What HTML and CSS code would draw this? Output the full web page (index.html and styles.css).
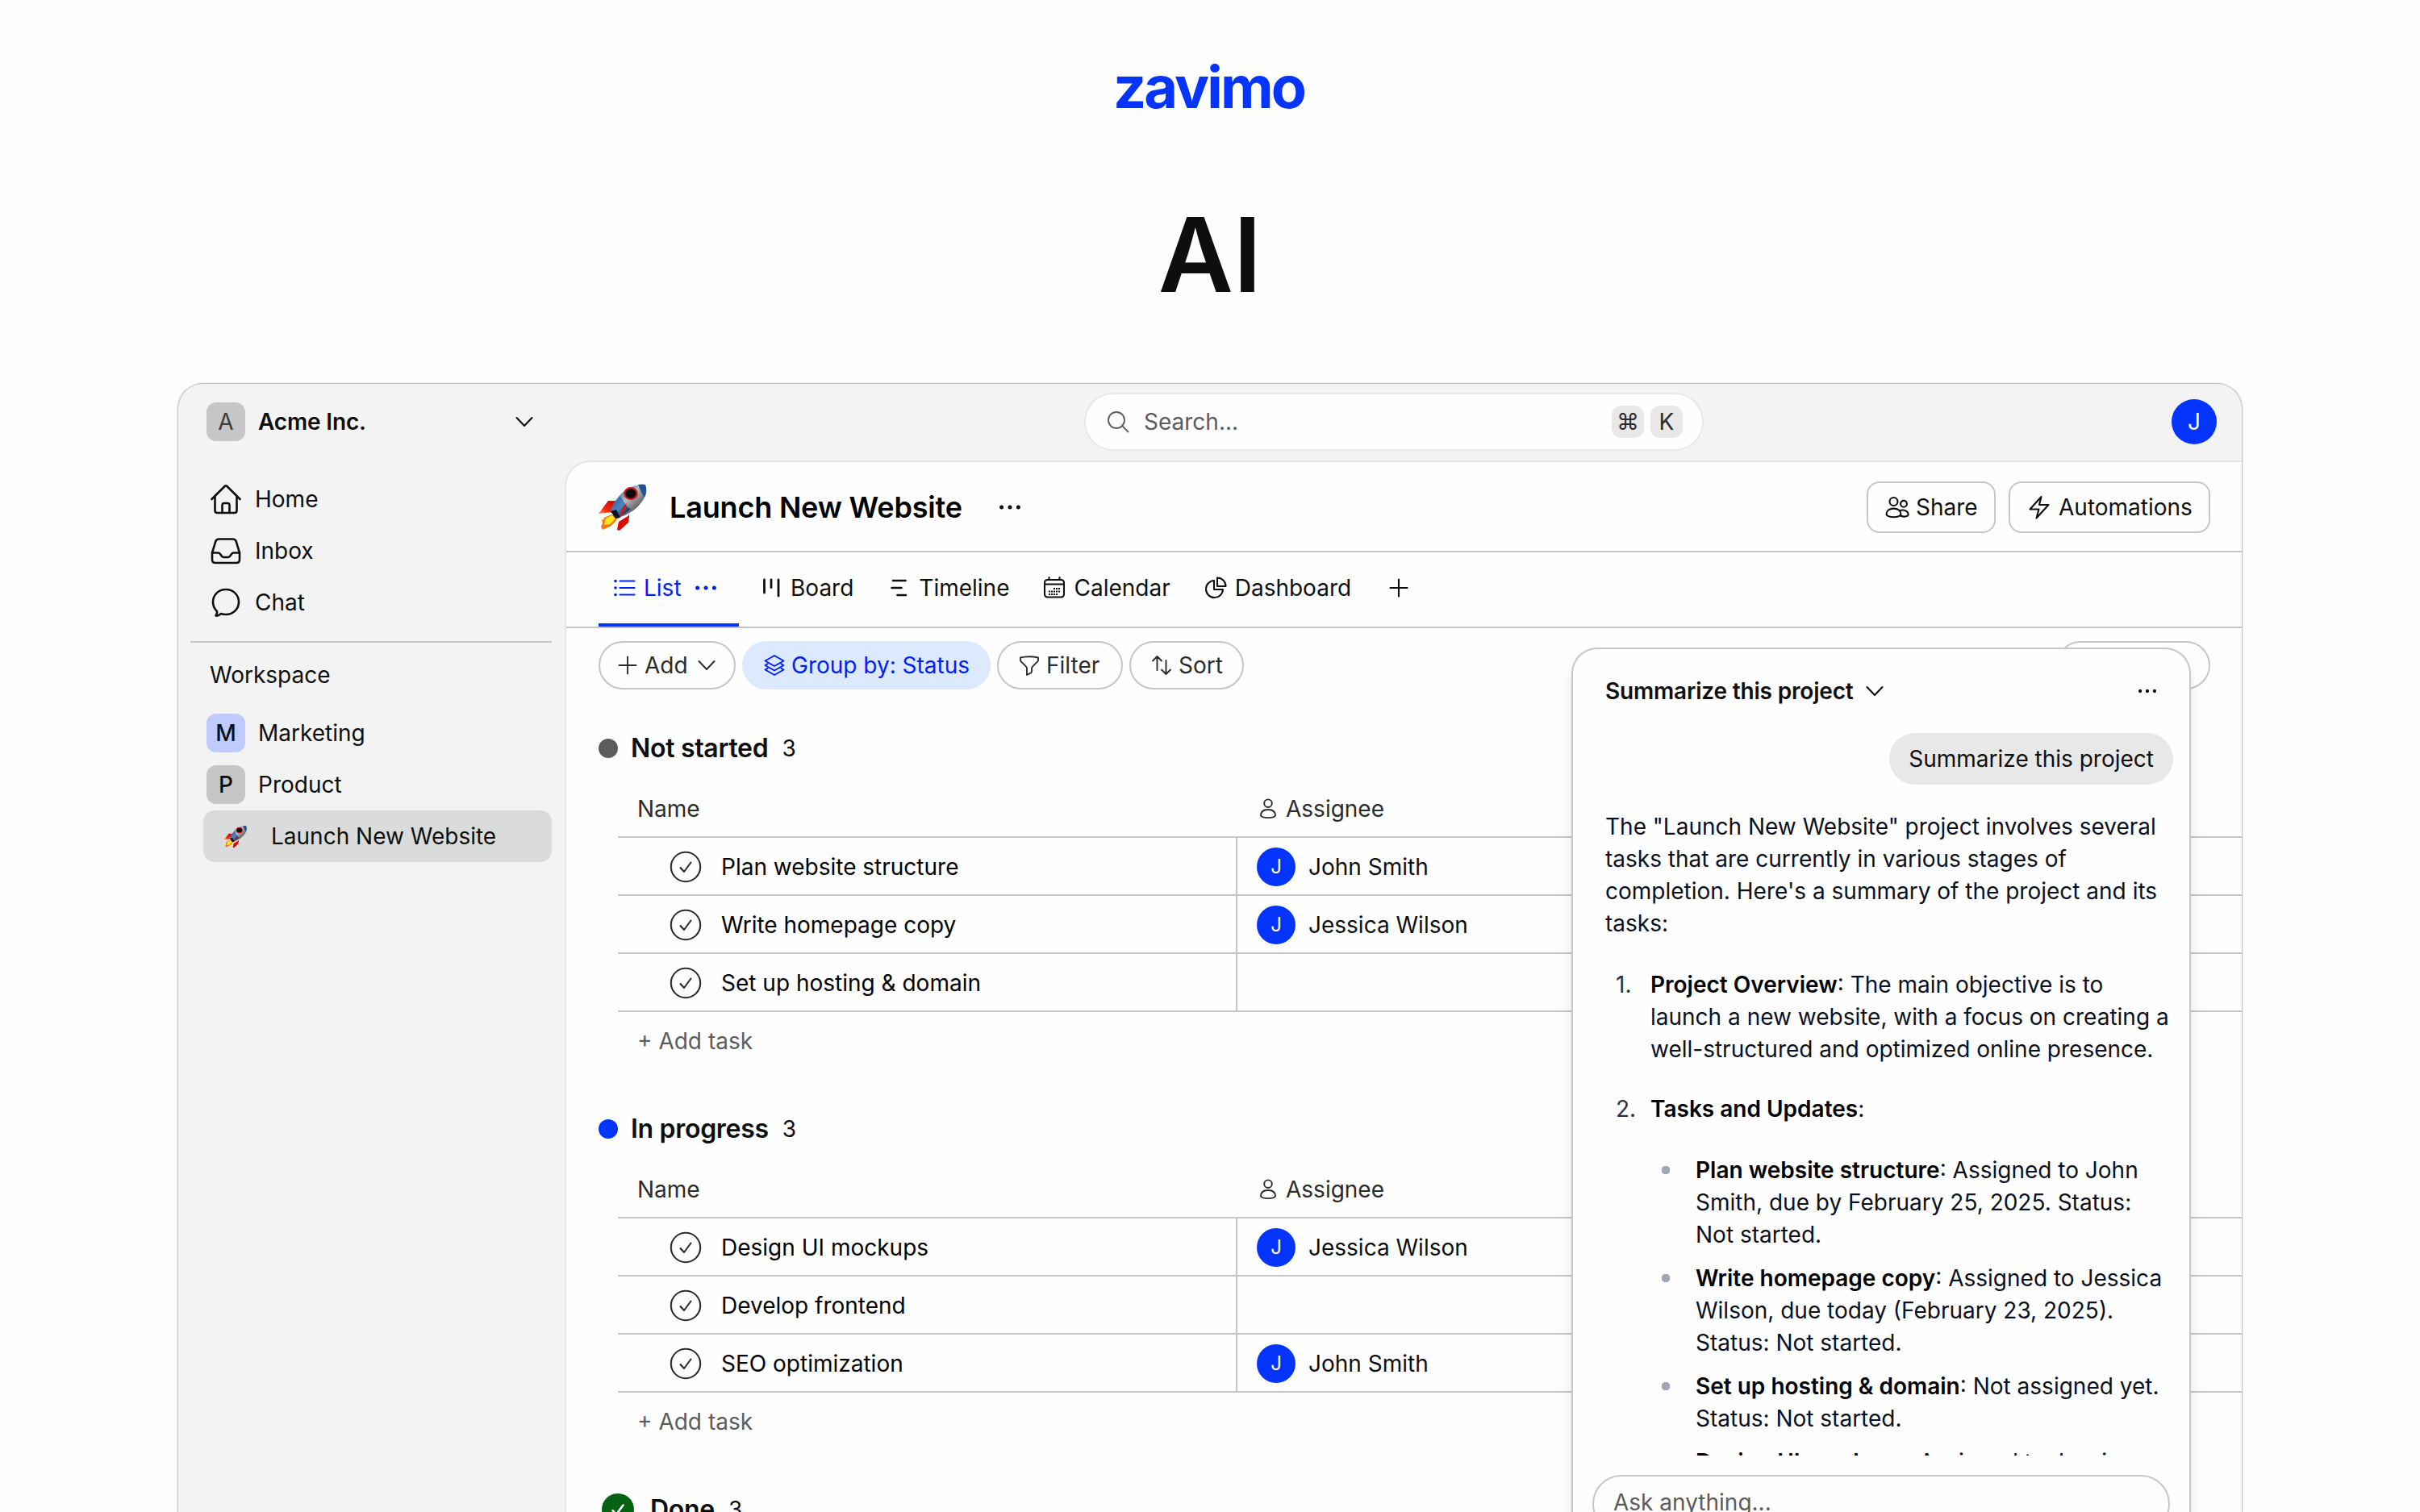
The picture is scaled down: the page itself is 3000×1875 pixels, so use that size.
FILE: index.html
```html
<!DOCTYPE html>
<html lang="en">
<head>
    <meta charset="UTF-8">
    <title>Zavimo AI</title>
    <link rel="stylesheet" href="styles.css">
</head>
<body>

<!-- shared icons -->
<svg class="sprite" width="0" height="0">
    <linearGradient id="hull" x1="0" y1="0" x2="1" y2="1">
        <stop offset="0.15" stop-color="#2f5f9e"/>
        <stop offset="0.45" stop-color="#b9bcc0"/>
        <stop offset="0.65" stop-color="#77797d"/>
        <stop offset="1" stop-color="#0c1526"/>
    </linearGradient>
    <linearGradient id="belly" x1="0" y1="0" x2="1" y2="1">
        <stop offset="0.1" stop-color="#2d62a8"/>
        <stop offset="0.5" stop-color="#4f83bd"/>
        <stop offset="0.9" stop-color="#0a1a38"/>
    </linearGradient>
    <linearGradient id="fin" x1="1" y1="0" x2="0" y2="1">
        <stop offset="0.3" stop-color="#d90d05"/>
        <stop offset="0.7" stop-color="#f02a10"/>
        <stop offset="1" stop-color="#ffa040"/>
    </linearGradient>
    <symbol id="rocket" viewBox="0 0 80 74">
        <path d="M36 29 L20 29 L8 45 L26 43 Z" fill="url(#fin)"/>
        <path d="M46 45 L46 50 L33 56 L31 65 L43 55 Z" fill="url(#fin)"/>
        <path d="M46 47 L45 56 L34 66 L31 65 L33 55 Z" fill="#d90d05"/>
        <path d="M24 46 L15 50 L14 53 L12 52 L13 57 L11 61 L13 65 L22 61 L28 56 L32 50 Z" fill="#f47a12"/>
        <path d="M24 47 L17 51 L15 59 L22 58 L29 51 Z" fill="#ffe81c"/>
        <path d="M23 43 Q27 27 42 15 Q54 8 66 9 Q69 20 62 30 Q52 44 33 50 Z" fill="url(#hull)"/>
        <path d="M23 43 Q26 31 35 23 Q43 38 48 39 Q41 46 33 50 Z" fill="url(#belly)"/>
        <path d="M57 9 Q62 8 66 9 Q69 17 65 25 Q60 18 57 9 Z" fill="#24528f"/>
        <path d="M23 42 L30 40 L35 50 L29 51 Z" fill="#0c1324"/>
        <path d="M43 32 Q37 36 34 50 Q40 44 43 32 Z" fill="#e01208"/>
        <ellipse cx="48" cy="20" rx="7.6" ry="7" fill="#0b0b10" stroke="#cf1712" stroke-width="2.2"/>
    </symbol>
    <symbol id="chevron" viewBox="0 0 24 24"><path d="M2.500 7 L12 17 L21.500 7"/></symbol>
    <symbol id="dots" viewBox="0 0 28 28"><g fill="currentColor" stroke="none"><circle cx="3.600" cy="14" r="2.500"/><circle cx="14" cy="14" r="2.500"/><circle cx="24.400" cy="14" r="2.500"/></g></symbol>
    <symbol id="plus" viewBox="0 0 28 28"><path d="M14 3.500 V24.500 M3.500 14 H24.500"/></symbol>
    <symbol id="user" viewBox="0 0 24 28"><circle cx="12" cy="7.200" r="4.800"/><path d="M3 22.500 C3 17.600 6.500 15 12 15 S21 17.600 21 22.500 C18.500 26 5.500 26 3 22.500 Z"/></symbol>
    <symbol id="check" viewBox="0 0 40 40"><circle cx="20" cy="20" r="18.200"/><path d="M13.500 21 L18 26 L26.500 14.500"/></symbol>
</svg>

<header class="hero">
    <div class="logo">zavimo</div>
    <h1>AI</h1>
</header>

<div class="window">
    <div class="topbar">
        <div class="account">
            <span class="badge badge-muted">A</span>
            <span class="account-name">Acme Inc.</span>
            <svg class="icon account-chevron"><use href="#chevron"/></svg>
        </div>
        <div class="search">
            <svg class="icon search-icon" viewBox="0 0 28 28"><circle cx="12" cy="12" r="10"/><path d="M19.200 19.200 L26.500 26.500"/></svg>
            <span>Search...</span>
            <kbd>⌘</kbd>
            <kbd>K</kbd>
        </div>
        <div class="avatar avatar-lg">J</div>
    </div>

    <aside class="sidebar">
        <a class="nav-item">
            <svg class="icon nav-icon" viewBox="0 0 40 40"><path d="M2.500 20 L18.600 4 Q20 2.700 21.400 4 L37.500 20"/><path d="M6.500 16.500 V34 Q6.500 37 9.500 37 H30.500 Q33.500 37 33.500 34 V16.500"/><path d="M15.500 37 V27.500 Q15.500 25 18 25 H22 Q24.500 25 24.500 27.500 V37"/></svg>
            Home
        </a>
        <a class="nav-item">
            <svg class="icon nav-icon" viewBox="0 0 40 40"><path d="M3 22.500 L7.300 8.300 Q8.300 5.500 11.300 5.500 H28.700 Q31.700 5.500 32.700 8.300 L37 22.500 V31 Q37 35 33 35 H7 Q3 35 3 31 Z"/><path d="M3 22.500 H10 Q12 22.500 13.200 24.300 Q15 28 17.500 28 H22.500 Q25 28 26.800 24.300 Q28 22.500 30 22.500 H37"/></svg>
            Inbox
        </a>
        <a class="nav-item">
            <svg class="icon nav-icon" viewBox="0 0 40 40"><path d="M20 4 C29.500 4 36 11 36 19.500 C36 28 29.500 35 20 35 C17.800 35 15.800 34.700 14 34 C12 36 9.500 36.800 7.500 36.500 C8.800 34.800 9.300 32.800 8.800 30.800 C5.800 28 4 24 4 19.500 C4 11 10.500 4 20 4 Z"/></svg>
            Chat
        </a>
        <hr>
        <div class="side-title">Workspace</div>
        <a class="space"><span class="badge badge-blue">M</span>Marketing</a>
        <a class="space"><span class="badge badge-gray">P</span>Product</a>
        <a class="space space-active"><svg class="rocket-sm"><use href="#rocket"/></svg>Launch New Website</a>
    </aside>

    <main class="panel">
        <div class="titlebar">
            <svg class="rocket"><use href="#rocket"/></svg>
            <h2>Launch New Website</h2>
            <svg class="icon icon-dots"><use href="#dots"/></svg>
            <button class="btn btn-share">
                <svg class="icon" viewBox="0 0 32 32"><circle cx="11.500" cy="9" r="5"/><circle cx="24" cy="11.800" r="3.900"/><path d="M2.500 25 C2.500 20.500 6 17.600 11.500 17.600 S20.500 20.500 20.500 25 C18 29.300 5 29.300 2.500 25 Z"/><path d="M19 20.500 C22 18.800 29.500 19 29.700 25.500 C28.500 27.600 24 28.300 20.500 26.700"/></svg>
                Share
            </button>
            <button class="btn btn-auto">
                <svg class="icon" viewBox="0 0 32 32"><path d="M18.500 3 L4.500 18.500 H15.500 L12.500 29.500 L27.500 13 H16 Z"/></svg>
                Automations
            </button>
        </div>

        <nav class="tabs">
            <a class="tab tab-active">
                <svg class="icon" viewBox="0 0 32 32"><path d="M10.500 7.500 H28.500 M10.500 16 H28.500 M10.500 24.500 H28.500"/><g fill="currentColor" stroke="none"><circle cx="5" cy="7.500" r="1.800"/><circle cx="5" cy="16" r="1.800"/><circle cx="5" cy="24.500" r="1.800"/></g></svg>
                List
                <svg class="icon icon-dots tab-dots"><use href="#dots"/></svg>
            </a>
            <a class="tab">
                <svg class="icon" viewBox="0 0 32 32"><path d="M7.500 6 V22 M16 6 V15.500 M25 6 V26" stroke-width="2.800"/></svg>
                Board
            </a>
            <a class="tab tab-timeline">
                <svg class="icon" viewBox="0 0 32 32"><path d="M9 7 H24.500 M7.500 16 H19.500 M14.500 25 H25" stroke-width="2.600"/></svg>
                Timeline
            </a>
            <a class="tab">
                <svg class="icon" viewBox="0 0 32 32"><rect x="4" y="6" width="24" height="21.500" rx="3.500"/><path d="M9.500 3 V6 M22.500 3 V6"/><path d="M4 11.500 H28"/><path d="M15 17 H24 M9 20.500 H24 M9 24 H20" stroke-width="2" stroke-dasharray="2 1" stroke-linecap="butt"/></svg>
                Calendar
            </a>
            <a class="tab">
                <svg class="icon" viewBox="0 0 32 32"><path d="M14 7 A10.500 10.500 0 1 0 25 18 H14 Z"/><path d="M18 3.500 A10.500 10.500 0 0 1 28.500 14 H18 Z"/></svg>
                Dashboard
            </a>
            <svg class="icon tab-plus"><use href="#plus"/></svg>
        </nav>

        <div class="toolbar">
            <button class="pill pill-add"><svg class="icon"><use href="#plus"/></svg>Add<svg class="icon pill-chevron"><use href="#chevron"/></svg></button>
            <button class="pill pill-group"><svg class="icon" viewBox="0 0 28 28"><path d="M14 2 L25.500 8.500 L14 15 L2.500 8.500 Z"/><path d="M5.500 12.300 L2.500 14 L14 20.500 L25.500 14 L22.500 12.300"/><path d="M5.500 17.800 L2.500 19.500 L14 26 L25.500 19.500 L22.500 17.800"/></svg>Group by: Status</button>
            <button class="pill pill-filter"><svg class="icon" viewBox="0 0 28 28"><path d="M3 4.500 Q14 2 25 4.500 V7.500 Q25 8.800 24 9.700 L18 15.700 Q17 16.700 17 18 V21.500 Q17 22.700 16 23.400 L11 26 V18 Q11 16.700 10 15.700 L4 9.700 Q3 8.800 3 7.500 Z"/></svg>Filter</button>
            <button class="pill pill-sort"><svg class="icon" viewBox="0 0 28 28"><path d="M8.500 20 V3 M3 8.500 L8.500 3 L14 8.500 M19.500 8 V25 M14 19.500 L19.500 25 L25 19.500"/></svg>Sort</button>
            <button class="pill pill-end"></button>
        </div>

        <section class="group">
            <div class="group-head"><span class="dot"></span><h3>Not started</h3><span class="count">3</span></div>
            <div class="table">
                <div class="row row-head"><div class="cell-name">Name</div><div class="cell-user"><svg class="icon user-icon"><use href="#user"/></svg>Assignee</div></div>
                <div class="row"><div class="cell-name"><svg class="icon check"><use href="#check"/></svg>Plan website structure</div><div class="cell-user"><span class="avatar">J</span>John Smith</div></div>
                <div class="row"><div class="cell-name"><svg class="icon check"><use href="#check"/></svg>Write homepage copy</div><div class="cell-user"><span class="avatar">J</span>Jessica Wilson</div></div>
                <div class="row"><div class="cell-name"><svg class="icon check"><use href="#check"/></svg>Set up hosting &amp; domain</div><div class="cell-user"></div></div>
            </div>
            <div class="add-task">+ Add task</div>
        </section>

        <section class="group">
            <div class="group-head"><span class="dot dot-blue"></span><h3>In progress</h3><span class="count">3</span></div>
            <div class="table">
                <div class="row row-head"><div class="cell-name">Name</div><div class="cell-user"><svg class="icon user-icon"><use href="#user"/></svg>Assignee</div></div>
                <div class="row"><div class="cell-name"><svg class="icon check"><use href="#check"/></svg>Design UI mockups</div><div class="cell-user"><span class="avatar">J</span>Jessica Wilson</div></div>
                <div class="row"><div class="cell-name"><svg class="icon check"><use href="#check"/></svg>Develop frontend</div><div class="cell-user"></div></div>
                <div class="row"><div class="cell-name"><svg class="icon check"><use href="#check"/></svg>SEO optimization</div><div class="cell-user"><span class="avatar">J</span>John Smith</div></div>
            </div>
            <div class="add-task">+ Add task</div>
        </section>

        <section class="group">
            <div class="group-head group-done">
                <svg class="done-icon" viewBox="0 0 40 40"><circle cx="20" cy="20" r="20" fill="#036310"/><path d="M13.500 21 L18 26 L26.500 14.500" fill="none" stroke="#fff" stroke-width="2.500" stroke-linecap="round" stroke-linejoin="round"/></svg>
                <h3>Done</h3><span class="count">3</span>
            </div>
        </section>
    </main>

    <!-- AI chat, floats over the project -->
    <div class="chat">
        <div class="chat-head">
            <span>Summarize this project</span>
            <svg class="icon chat-chevron"><use href="#chevron"/></svg>
            <svg class="icon icon-dots chat-dots"><use href="#dots"/></svg>
        </div>
        <div class="chat-body">
            <div class="bubble">Summarize this project</div>
            <p>The "Launch New Website" project involves several tasks that are currently in various stages of completion. Here's a summary of the project and its tasks:</p>
            <div class="item">
                <span class="num">1.</span>
                <div class="item-text"><b>Project Overview</b>: The main objective is to launch a new website, with a focus on creating a well-structured and optimized online presence.</div>
            </div>
            <div class="item">
                <span class="num">2.</span>
                <div class="item-text">
                    <b>Tasks and Updates</b>:
                    <ul>
                        <li><b>Plan website structure</b>: Assigned to John Smith, due by February 25, 2025. Status: Not started.</li>
                        <li><b>Write homepage copy</b>: Assigned to Jessica Wilson, due today (February 23, 2025). Status: Not started.</li>
                        <li><b>Set up hosting &amp; domain</b>: Not assigned yet. Status: Not started.</li>
                        <li><b>Design UI mockups</b>: Assigned to Jessica Wilson.</li>
                    </ul>
                </div>
            </div>
        </div>
        <div class="chat-input">Ask anything...</div>
    </div>
</div>

</body>
</html>
```

FILE: styles.css
```css
* {
    box-sizing: border-box;
}
body {
    margin: 0;
    height: 1875px;
    overflow: hidden;
    background: #fefefe;
    color: #0d0f0e;
    font-family: Inter, "Liberation Sans", sans-serif;
    font-size: 28px;
    line-height: 40px;
}
h1, h2, h3, p {
    margin: 0;
}
button {
    font: inherit;
    color: inherit;
    background: none;
    padding: 0;
    white-space: nowrap;
}
.sprite {
    display: block;
}
.icon {
    width: 32px;
    height: 32px;
    flex: none;
    fill: none;
    stroke: currentColor;
    stroke-width: 2.1;
    stroke-linecap: round;
    stroke-linejoin: round;
}

/* hero */
.hero {
    height: 475px;
    text-align: center;
}
.logo {
    padding: 64px 3px 0 0;
    color: #0534ff;
    font-size: 72px;
    font-weight: 700;
    line-height: 88px;
    letter-spacing: -2.9px;
}
.hero h1 {
    margin-top: 91px;
    font-size: 128px;
    font-weight: 600;
    line-height: 146px;
}

/* app window */
.window {
    position: relative;
    display: grid;
    grid-template-columns: 479px 1fr;
    grid-template-rows: 95px 1fr;
    width: 2560px;
    height: 1400px;
    margin: 0 auto;
    border: 1px solid #c0c0c0;
    border-bottom: 0;
    border-radius: 32px 32px 0 0;
    background: #f3f3f3;
    box-shadow: 0 0 3px rgba(0, 0, 0, 0.1);
    overflow: hidden;
}
.topbar {
    grid-column: 1 / 3;
    display: flex;
    align-items: center;
    padding: 0 31px 1px 35px;
}
.account {
    display: flex;
    align-items: center;
    width: 406px;
}
.badge {
    display: flex;
    align-items: center;
    justify-content: center;
    width: 48px;
    height: 48px;
    margin-right: 16px;
    border-radius: 12px;
    font-weight: 500;
}
.badge-muted {
    background: #c6c6c6;
    color: #3b3b3b;
    font-weight: 400;
}
.badge-gray {
    background: #c6c6c6;
}
.badge-blue {
    background: #bfcbff;
}
.account-name {
    font-weight: 600;
    letter-spacing: -0.15px;
}
.account-chevron {
    width: 24px;
    height: 24px;
    margin-left: auto;
}
.search {
    display: flex;
    align-items: center;
    gap: 8px;
    width: 768px;
    height: 72px;
    margin-left: 682px;
    padding: 0 24px 0 26px;
    border: 2px solid #e8e8e8;
    border-radius: 36px;
    background: #fefefe;
    color: #5c5c5c;
}
.search-icon {
    width: 28px;
    height: 28px;
    stroke-width: 1.9;
}
.search span {
    flex: 1;
    padding-left: 10px;
}
kbd {
    width: 40px;
    height: 40px;
    border-radius: 12px;
    background: #e8e8e8;
    color: #2c2c2c;
    font: inherit;
    text-align: center;
}
.avatar {
    display: flex;
    align-items: center;
    justify-content: center;
    width: 48px;
    height: 48px;
    border-radius: 50%;
    background: #0534ff;
    color: #fff;
    font-size: 24px;
}
.avatar-lg {
    width: 56px;
    height: 56px;
    margin-left: auto;
    font-size: 28px;
}

/* sidebar */
.sidebar {
    padding: 16px 16px 0 15px;
}
.nav-item {
    display: flex;
    align-items: center;
    gap: 16px;
    height: 64px;
    padding-left: 24px;
}
.nav-icon {
    width: 40px;
    height: 40px;
    stroke-width: 2.6;
}
.sidebar hr {
    height: 2px;
    margin: 16px 0 0;
    border: 0;
    background: #c6c6c6;
}
.side-title {
    padding: 20px 24px 0;
    margin-bottom: 20px;
}
.space {
    display: flex;
    align-items: center;
    height: 64px;
    margin-left: 16px;
    padding-left: 4px;
}
.space-active {
    border-radius: 14px;
    background: #dadcdb;
    padding-left: 22px;
}
.rocket-sm {
    width: 38px;
    height: 35px;
    margin-right: 24px;
}

/* project panel */
.panel {
    border-top: 2px solid #e6e6e6;
    border-left: 2px solid #e6e6e6;
    border-radius: 32px 0 0 0;
    background: #fefefe;
    overflow: hidden;
}
.titlebar {
    display: flex;
    align-items: center;
    height: 112px;
    padding: 2px 39px 0 32px;
    border-bottom: 2px solid #c6c6c6;
}
.rocket {
    width: 80px;
    height: 74px;
}
.titlebar h2 {
    margin: 0 45px 0 16px;
    font-size: 36px;
    font-weight: 600;
    line-height: 44px;
    letter-spacing: -0.18px;
    color: #000;
}
.icon-dots {
    width: 28px;
    height: 28px;
}
.btn {
    display: flex;
    align-items: center;
    height: 64px;
    padding-left: 20px;
    border: 2px solid #c6c6c6;
    border-radius: 16px;
}
.btn-share {
    width: 160px;
    gap: 7px;
    margin-left: auto;
    margin-right: 16px;
}
.btn-auto {
    width: 250px;
    gap: 8px;
}
.tabs {
    display: flex;
    gap: 8px;
    height: 94px;
    padding-left: 40px;
    border-bottom: 2px solid #c6c6c6;
}
.tab {
    display: flex;
    align-items: center;
    gap: 8px;
    height: 92px;
    padding: 0 16px;
    border-bottom: 4px solid transparent;
}
.tab-active {
    width: 174px;
    border-color: #0534ff;
    color: #001eff;
}
.tab-timeline {
    gap: 9px;
}
.tab-dots {
    margin-left: 8px;
}
.tab-plus {
    width: 28px;
    height: 28px;
    margin: 30px 0 0 21px;
}
.toolbar {
    display: flex;
    gap: 8px;
    padding: 16px 39px 0 40px;
}
.pill {
    display: flex;
    align-items: center;
    gap: 7px;
    height: 60px;
    padding-left: 24px;
    border: 2px solid #c6c6c6;
    border-radius: 30px;
    color: #2c2c2c;
}
.pill .icon {
    width: 28px;
    height: 28px;
    stroke-width: 1.9;
}
.pill-add {
    width: 170px;
    padding-left: 20px;
}
.pill .pill-chevron {
    width: 24px;
    height: 24px;
    margin-left: 4px;
}
.pill-group {
    width: 308px;
    border-color: #dce9ff;
    background: #dce9ff;
    color: #001eff;
}
.pill-filter {
    width: 156px;
}
.pill-sort {
    width: 142px;
}
.pill-end {
    width: 191px;
    margin-left: auto;
}

/* task groups */
.group {
    height: 472px;
    padding: 48px 0 0 40px;
}
.group-head {
    display: flex;
    align-items: center;
    height: 49px;
}
.group-head h3 {
    margin: 0 17px 0 16px;
    font-size: 32px;
    font-weight: 600;
    letter-spacing: -0.3px;
}
.dot {
    width: 24px;
    height: 24px;
    border-radius: 50%;
    background: #5c5c5c;
}
.dot-blue {
    background: #0534ff;
}
.group-done {
    padding-left: 4px;
}
.done-icon {
    width: 40px;
    height: 40px;
    margin-right: 4px;
}
.table {
    margin: 15px 0 0 24px;
}
.row {
    display: flex;
    height: 72px;
    border-bottom: 2px solid #c6c6c6;
}
.cell-name {
    display: flex;
    align-items: center;
    width: 768px;
    padding: 2px 0 0 64px;
    border-right: 2px solid #c6c6c6;
    color: #000;
}
.cell-user {
    display: flex;
    align-items: center;
    gap: 16px;
    padding: 2px 0 0 24px;
}
.row-head > div {
    border: 0;
    color: #2c2c2c;
}
.row-head .cell-name {
    padding-left: 24px;
}
.row-head .cell-user {
    gap: 10px;
    padding-left: 26px;
}
.user-icon {
    width: 24px;
    height: 28px;
    stroke-width: 1.9;
}
.check {
    width: 40px;
    height: 40px;
    margin-right: 24px;
    color: #2c2c2c;
}
.add-task {
    padding: 16px 0 0 48px;
    color: #5c5c5c;
}

/* chat popup */
.chat {
    position: absolute;
    top: 327px;
    right: 63px;
    bottom: 0;
    width: 768px;
    border: 2px solid #c6c6c6;
    border-bottom: 0;
    border-radius: 32px 32px 0 0;
    background: #fefefe;
    box-shadow: 0 20px 30px -6px rgba(0, 0, 0, 0.1), 0 8px 12px -4px rgba(0, 0, 0, 0.1);
    overflow: hidden;
}
.chat-head {
    display: flex;
    align-items: center;
    height: 104px;
    padding: 0 40px;
    font-weight: 600;
    letter-spacing: -0.18px;
}
.chat-chevron {
    width: 24px;
    height: 24px;
    margin-left: 14px;
}
.chat-dots {
    width: 24px;
    height: 24px;
    margin-left: auto;
}
.chat-body {
    height: 896px;
    padding: 0 20px 0 40px;
    color: #0a1020;
    overflow: hidden;
}
.bubble {
    width: fit-content;
    margin: 0 0 32px auto;
    padding: 12px 24px;
    border-radius: 32px;
    background: #e8e8e8;
    color: #0d0f0e;
}
.item {
    display: flex;
    margin-top: 34px;
}
p + .item {
    margin-top: 36px;
}
.num {
    width: 43px;
    margin-left: 13px;
    flex: none;
    color: #2a3242;
}
b {
    color: #000;
    font-weight: 600;
}
ul {
    margin: 36px 0 0;
    padding: 0;
    list-style: none;
}
li {
    margin-bottom: 14px;
    padding-left: 56px;
    background: radial-gradient(circle at 19px 20px, #a0a6b3 5px, transparent 5.5px);
}
.chat-input {
    height: 72px;
    margin: 24px 24px 0;
    padding: 12px 24px;
    border: 2px solid #c6c6c6;
    border-radius: 36px;
    color: #5c5c5c;
}
```
